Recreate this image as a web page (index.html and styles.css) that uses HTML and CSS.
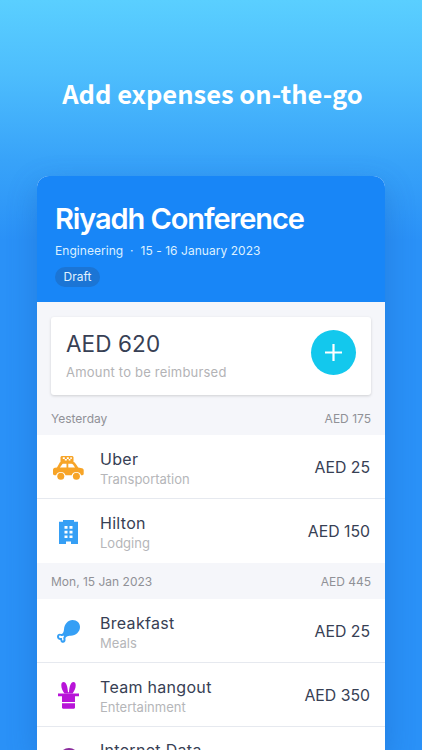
FILE: index.html
```
<!DOCTYPE html>
<html lang="en">
<head>
    <meta charset="UTF-8">
    <meta name="viewport" content="width=device-width, initial-scale=1.0">
    <title>Add expenses on-the-go</title>
    <link rel="stylesheet" href="styles.css">
</head>
<body>
    <h1 class="headline">Add expenses on-the-go</h1>
    <div class="phone">
        <header class="report-header">
            <h2>Riyadh Conference</h2>
            <p class="meta">Engineering &nbsp;·&nbsp; 15 - 16 January 2023</p>
            <span class="status">Draft</span>
        </header>
        <div class="summary">
            <div class="total-card">
                <div>
                    <div class="total">AED 620</div>
                    <div class="total-label">Amount to be reimbursed</div>
                </div>
                <button class="add" aria-label="Add expense">
                    <svg width="17" height="17" viewBox="0 0 17 17"><path d="M8.500 0v17M0 8.500h17" stroke="#fff" stroke-width="2.200"/></svg>
                </button>
            </div>
        </div>

        <div class="day first"><span class="date">Yesterday</span><span class="day-total">AED 175</span></div>
        <div class="expense">
            <div class="icon">
                <svg width="31" height="24" viewBox="0 0 31 24">
                    <path fill="#f7a427" fill-rule="evenodd" d="M8.500 0h11l1 1v5c1.200.3 1.700 1.200 2.500 2.300l2.200 3.200 3.800.7c1 .3 1.700 1 1.700 2v3.400c0 1-.5 1.600-1.400 1.600h-1.200a5 5 0 0 0-9.400 0h-6.200a5 5 0 0 0-9.400 0H1.600C.6 19.200 0 18.600 0 17.600v-3.400c0-1.400.7-2.200 2-2.400l2-.3L6.100 7.700c.4-.8.8-1.300 1.400-1.600V1zM9.300 8.200 6.900 11.600h6.600V7.800h-3.100c-.5 0-.8.1-1.100.4zM15.300 7.800v3.800h6.700l-2-3c-.4-.6-.9-.8-1.600-.8z"/>
                    <path d="M9.800 1.300h2v1.600h-2zM13.800 1.300h2v1.600h-2zM17.300 1.300h1.500v1.600h-1.500zM11.800 2.900h2v1.700h-2zM15.700 2.900h1.700v1.700h-1.700z" fill="#fff"/>
                    <circle cx="7.800" cy="20.200" r="3.500" fill="#f7a427"/>
                    <circle cx="23.400" cy="20.200" r="3.500" fill="#f7a427"/>
                </svg>
            </div>
            <div class="info"><div class="name">Uber</div><div class="category">Transportation</div></div>
            <div class="amount">AED 25</div>
        </div>
        <div class="expense">
            <div class="icon">
                <svg width="19" height="24" viewBox="0 0 19 24">
                    <path fill="#359ff5" d="M4 0h11v1.800h4V24h-7v-2.500H7V24H0V1.800h4z"/>
                    <path fill="#fff" d="M5.500 6h3v2.700h-3zM10.500 6h3v2.700h-3zM5.500 10.700h3v2.700h-3zM10.500 10.700h3v2.700h-3zM5.500 15.400h3v2.700h-3zM10.500 15.400h3v2.700h-3z"/>
                </svg>
            </div>
            <div class="info"><div class="name">Hilton</div><div class="category">Lodging</div></div>
            <div class="amount">AED 150</div>
        </div>

        <div class="day"><span class="date">Mon, 15 Jan 2023</span><span class="day-total">AED 445</span></div>
        <div class="expense">
            <div class="icon">
                <svg width="23" height="23" viewBox="0 0 23 23">
                    <path fill="#359ff5" d="M15.500 0C20 0 23 3 23 7c0 4.800-4.300 8.700-9.200 8.700-1.900 0-3 .2-4.300 1.100-.9.700-1.200 1.300-1 2.500.3 2-.8 3.500-2.400 3.500s-2.700-1.200-2.700-2.900C1.500 19.800 0 18.600 0 16.700c0-2 1.600-3.100 3.500-2.800 1.300.2 1.700-.1 2.400-1 .8-1 .9-2 1.100-3.700C7.500 4 11 0 15.500 0z"/>
                    <path fill="#fff" d="M2 16.700c0-.9.800-1.300 1.700-1 .9.400 1.600.3 2.500-.3l.9.900c-.9.900-1 1.800-.6 2.900.2.800-.1 1.300-.6 1.300-.7 0-.9-.5-.8-1.300.1-.9-.2-1.300-1.100-1.200-1.200.1-2-.3-2-1.300z"/>
                </svg>
            </div>
            <div class="info"><div class="name">Breakfast</div><div class="category">Meals</div></div>
            <div class="amount">AED 25</div>
        </div>
        <div class="expense">
            <div class="icon">
                <svg width="21" height="27" viewBox="0 0 21 27">
                    <path fill="#b814d8" d="M6.500 11.500C4.600 9 3.300 6 3.300 3.200 3.300 1.200 4.300 0 5.600 0c2.600 0 4.100 4.800 4.400 10.300h1c.3-5.500 1.800-10.300 4.400-10.300 1.300 0 2.300 1.200 2.300 3.200 0 2.800-1.300 5.800-3.200 8.300z"/>
                    <path fill="#b814d8" d="M0 11.500h21v2.800h-4V20H4v-5.700H0zM4 21.200h13v4.400c0 .7-.4 1.100-1.100 1.100H5.100c-.7 0-1.100-.4-1.100-1.100z"/>
                </svg>
            </div>
            <div class="info"><div class="name">Team hangout</div><div class="category">Entertainment</div></div>
            <div class="amount">AED 350</div>
        </div>
        <div class="expense">
            <div class="icon">
                <svg width="20" height="20" viewBox="0 0 20 20">
                    <circle cx="10" cy="10" r="10" fill="#8a2c9c"/>
                </svg>
            </div>
            <div class="info"><div class="name">Internet Data</div></div>
        </div>
    </div>
</body>
</html>
```
FILE: styles.css
```
* {
    box-sizing: border-box;
    margin: 0;
    padding: 0;
}
body {
    height: 750px;
    overflow: hidden;
    font-family: Inter, "Liberation Sans", sans-serif;
    color: #374054;
    background: linear-gradient(#5acfff 0, #4dbdfd 75px, #38a3f9 160px, #2a91f7 240px, #2a91f7 100%);
}
.headline {
    height: 176px;
    padding: 73px 0 0 3px;
    font-family: "Noto Sans CJK SC", sans-serif;
    font-size: 25.5px;
    line-height: 40px;
    font-weight: 700;
    text-align: center;
    color: #fff;
    white-space: nowrap;
}
.phone {
    width: 348px;
    height: 574px;
    margin-left: 37px;
    background: #fff;
    border-radius: 12px 12px 0 0;
    overflow: hidden;
    box-shadow: 0 10px 30px rgba(20, 80, 170, 0.3);
}
.report-header {
    height: 126px;
    padding: 25px 18px 0;
    background: #1886f7;
    color: #fff;
}
.report-header h2 {
    font-size: 29px;
    line-height: 36px;
    font-weight: 600;
    letter-spacing: -1.1px;
    white-space: nowrap;
}
.meta {
    margin-top: 6px;
    font-size: 12px;
    line-height: 16px;
    letter-spacing: 0.05px;
    color: #dcf0ff;
}
.status {
    display: block;
    width: 45px;
    height: 20px;
    margin-top: 8px;
    border-radius: 10px;
    background: #1b75d5;
    font-size: 12px;
    line-height: 20px;
    text-align: center;
    color: #e2f3ff;
}
.summary {
    padding: 15px 14px 0;
    background: #f5f6fa;
}
.total-card {
    position: relative;
    display: flex;
    justify-content: space-between;
    height: 78px;
    padding: 13px 15px;
    background: #fff;
    border-radius: 3px;
    box-shadow: 0 1px 3px rgba(0, 0, 0, 0.16);
}
.total {
    font-size: 22.5px;
    line-height: 28px;
    letter-spacing: 0.1px;
}
.total-label {
    margin-top: 6px;
    font-size: 13px;
    line-height: 17px;
    letter-spacing: 0.2px;
    color: #b3b3b6;
}
.add {
    display: flex;
    align-items: center;
    justify-content: center;
    width: 45px;
    height: 45px;
    border: none;
    border-radius: 50%;
    background: #13c8ed;
}
.day {
    display: flex;
    justify-content: space-between;
    height: 36px;
    padding: 0 14px;
    background: #f5f6fa;
    font-size: 12px;
    line-height: 37px;
    color: #909197;
}
.day.first {
    height: 40px;
    line-height: 47px;
}
.expense {
    display: flex;
    align-items: center;
    height: 64px;
    padding: 2px 15px 0 0;
    border-bottom: 1px solid #e6e9ef;
}
.expense:has(+ .day) {
    padding-top: 1px;
    border-bottom: none;
}
.expense:last-child {
    align-items: flex-start;
    height: auto;
    padding-top: 12px;
    border-bottom: none;
}
.expense:last-child .icon {
    padding-top: 9px;
}
.icon {
    display: flex;
    justify-content: center;
    width: 63px;
}
.info {
    flex: 1;
}
.name {
    font-size: 16px;
    line-height: 22px;
    letter-spacing: 0.3px;
}
.category {
    font-size: 13px;
    line-height: 18px;
    color: #b5b6b9;
}
.amount {
    font-size: 15.8px;
}
```
